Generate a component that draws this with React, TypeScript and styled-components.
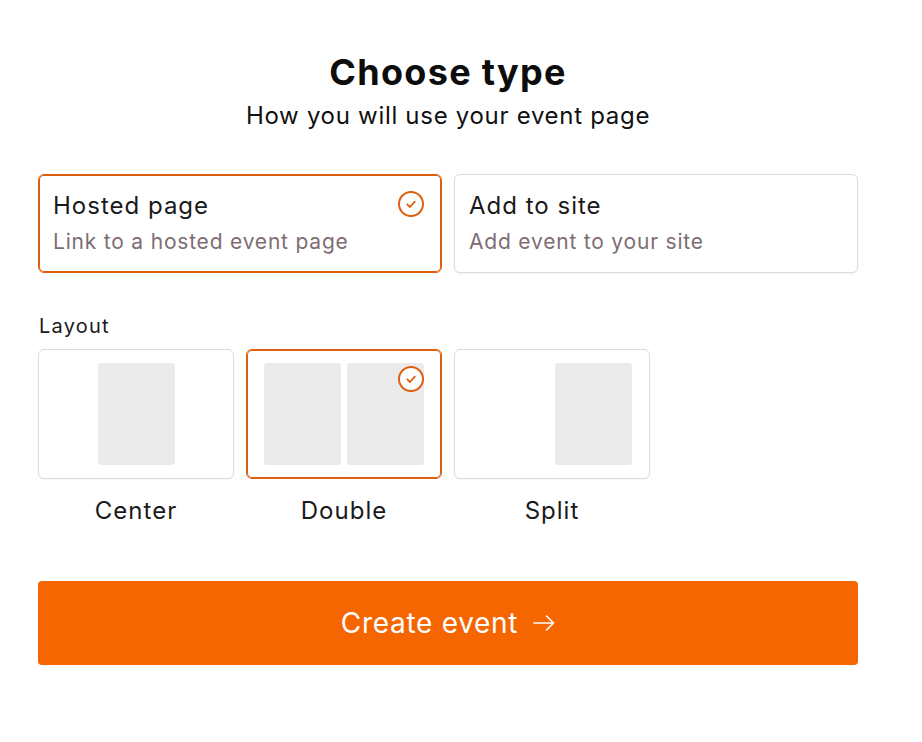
import React, { useState } from 'react';
import styled, { createGlobalStyle, css } from 'styled-components';

const GlobalStyle = createGlobalStyle`
    body {
        margin: 0;
        background: #fff;
        font-family: Inter, 'Noto Sans', sans-serif;
        color: #1a1a1a;
    }
`;

const Page = styled.div`
    width: 820px;
    padding: 50px 38px 40px;
    display: flex;
    flex-direction: column;
`;

const Header = styled.div`
    display: flex;
    flex-direction: column;
    align-items: center;
    margin-bottom: 42px;
`;

const Title = styled.h1`
    margin: 0;
    font-size: 36px;
    line-height: 44px;
    font-weight: 700;
    letter-spacing: 1.3px;
    color: #0d0d0d;
`;

const Subtitle = styled.p`
    margin: 6px 0 0;
    font-size: 24px;
    line-height: 32px;
    letter-spacing: 0.7px;
    color: #111;
`;

const TypeRow = styled.div`
    display: grid;
    grid-template-columns: 1fr 1fr;
    gap: 12px;
`;

const selectedBorder = css`
    border-color: #dd5f10;
    box-shadow: inset 0 0 0 1px #dd5f10;
`;

const TypeCard = styled.div<{ $selected?: boolean }>`
    position: relative;
    padding: 16px 14px;
    border: 1px solid #dcdcdc;
    border-radius: 6px;
    background: #fff;
    box-shadow: 0 1px 2px rgba(0, 0, 0, 0.05);
    cursor: pointer;
    ${(p) => p.$selected && selectedBorder}
`;

const CardTitle = styled.div`
    font-size: 24px;
    line-height: 30px;
    letter-spacing: 1px;
    color: #1a1a1a;
`;

const CardText = styled.div`
    margin-top: 7px;
    font-size: 21px;
    line-height: 28px;
    letter-spacing: 0.8px;
    color: #7d6d73;
`;

const CheckWrap = styled.span`
    position: absolute;
    top: 16px;
    right: 17px;
    width: 26px;
    height: 26px;
    display: flex;
`;

const SectionLabel = styled.div`
    margin: 39px 0 9px 1px;
    font-size: 20px;
    line-height: 28px;
    letter-spacing: 1.2px;
    color: #1a1a1a;
`;

const LayoutRow = styled.div`
    display: grid;
    grid-template-columns: repeat(4, 1fr);
    gap: 12px;
`;

const LayoutOption = styled.div`
    display: flex;
    flex-direction: column;
    cursor: pointer;
`;

type Align = 'center' | 'space-between' | 'flex-end';

const LayoutCard = styled.div<{ $selected?: boolean; $align: Align }>`
    position: relative;
    height: 130px;
    box-sizing: border-box;
    padding: 13px 17px;
    display: flex;
    gap: 6px;
    justify-content: ${(p) => p.$align};
    border: 1px solid #dcdcdc;
    border-radius: 6px;
    background: #fff;
    box-shadow: 0 1px 2px rgba(0, 0, 0, 0.05);
    ${(p) => p.$selected && selectedBorder}
`;

const Block = styled.div`
    width: 77px;
    height: 102px;
    border-radius: 3px;
    background: #ebebeb;
`;

const LayoutName = styled.div`
    margin-top: 17px;
    text-align: center;
    font-size: 24px;
    line-height: 30px;
    letter-spacing: 1px;
    color: #1a1a1a;
`;

const CreateButton = styled.button`
    margin-top: 55px;
    height: 84px;
    border: none;
    border-radius: 4px;
    background: #f56600;
    color: #fff;
    font-family: inherit;
    font-size: 28px;
    letter-spacing: 0.7px;
    display: flex;
    align-items: center;
    justify-content: center;
    gap: 15px;
    cursor: pointer;
`;

const CheckCircle = () => (
    <svg width="26" height="26" viewBox="0 0 26 26">
        <circle cx="13" cy="13" r="12" fill="#fff" stroke="#dd5f10" strokeWidth="2" />
        <path
            d="M9.3 13.4 L12 16 L16.8 10.6"
            fill="none"
            stroke="#dd5f10"
            strokeWidth="1.8"
            strokeLinecap="round"
            strokeLinejoin="round"
        />
    </svg>
);

const Arrow = () => (
    <svg width="22" height="16" viewBox="0 0 22 16">
        <path
            d="M1 8 H20.5 M13.5 1 L20.5 8 L13.5 15"
            fill="none"
            stroke="#fff"
            strokeWidth="1.6"
            strokeLinecap="round"
            strokeLinejoin="round"
        />
    </svg>
);

const types = [
    { id: 'hosted', title: 'Hosted page', text: 'Link to a hosted event page' },
    { id: 'embed', title: 'Add to site', text: 'Add event to your site' },
];

const layouts: { id: string; name: string; align: Align; blocks: number }[] = [
    { id: 'center', name: 'Center', align: 'center', blocks: 1 },
    { id: 'double', name: 'Double', align: 'space-between', blocks: 2 },
    { id: 'split', name: 'Split', align: 'flex-end', blocks: 1 },
];

const App = () => {
    const [type, setType] = useState<string>('hosted');
    const [layout, setLayout] = useState<string>('double');

    return (
        <Page>
            <GlobalStyle />
            <Header>
                <Title>Choose type</Title>
                <Subtitle>How you will use your event page</Subtitle>
            </Header>
            <TypeRow>
                {types.map((t) => (
                    <TypeCard key={t.id} $selected={type === t.id} onClick={() => setType(t.id)}>
                        <CardTitle>{t.title}</CardTitle>
                        <CardText>{t.text}</CardText>
                        {type === t.id && (
                            <CheckWrap>
                                <CheckCircle />
                            </CheckWrap>
                        )}
                    </TypeCard>
                ))}
            </TypeRow>
            <SectionLabel>Layout</SectionLabel>
            <LayoutRow>
                {layouts.map((l) => (
                    <LayoutOption key={l.id} onClick={() => setLayout(l.id)}>
                        <LayoutCard $selected={layout === l.id} $align={l.align}>
                            {Array.from({ length: l.blocks }).map((_, i) => (
                                <Block key={i} />
                            ))}
                            {layout === l.id && (
                                <CheckWrap>
                                    <CheckCircle />
                                </CheckWrap>
                            )}
                        </LayoutCard>
                        <LayoutName>{l.name}</LayoutName>
                    </LayoutOption>
                ))}
            </LayoutRow>
            <CreateButton>
                Create event
                <Arrow />
            </CreateButton>
        </Page>
    );
};

export default App;
